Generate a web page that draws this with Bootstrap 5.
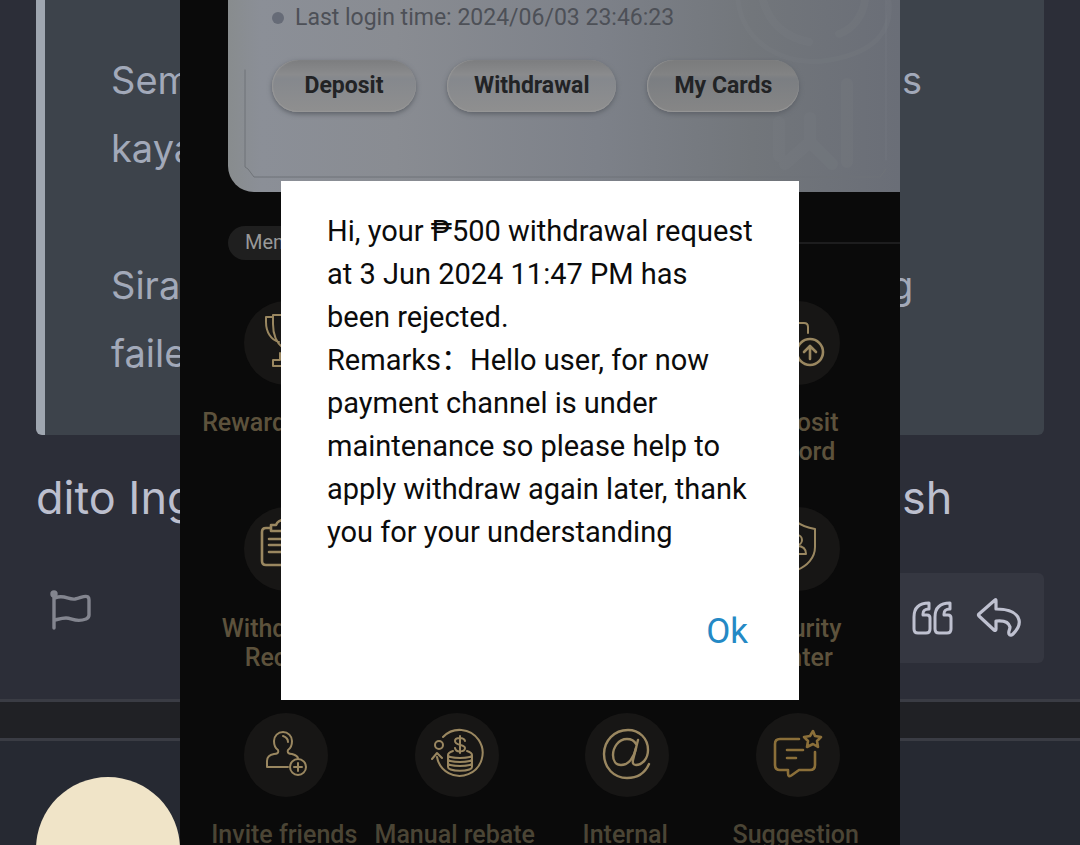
<!DOCTYPE html>
<html lang="en">
<head>
<meta charset="utf-8">
<meta name="viewport" content="width=device-width, initial-scale=1">
<title>Withdrawal notice</title>
<link href="https://cdn.jsdelivr.net/npm/bootstrap@5.3.0/dist/css/bootstrap.min.css" rel="stylesheet">
<style>
  body { background: #2c2e38; font-family: Roboto, "Noto Sans CJK SC", sans-serif; }
  .forum { font-family: Inter, "Open Sans", sans-serif; color: #bcbfce; }
  .post-quote { margin: 0 36px; padding: 46px 0 48px 66px; background: #3d434b; border-left: 9px solid #9fa6b0; border-radius: 0 0 6px 6px; color: #a2a9b9; font-size: 38px; line-height: 68px; }
  .split-line { display: grid; grid-template-columns: 1fr 142px; white-space: nowrap; }
  .split-line.wide { grid-template-columns: 1fr 154px; }
  .blank-line { height: 69px; }
  .post-text { margin: 0 36px; padding-top: 29px; font-size: 45px; line-height: 68px; }
  .post-actions { margin: 41px 36px 36px; }
  .post-actions button { border: 0; background: none; padding: 0; line-height: 0; }
  .action-group { width: 180px; height: 90px; padding: 0 22px; gap: 22px; background: #353741; border-radius: 6px; }
  .post-gap { height: 42px; background: #202125; border: solid #3a3c44; border-width: 3px 0; }
  .next-post { background: #262932; padding: 36px; }
  .avatar { width: 144px; height: 144px; background: #f0e4c8; }

  .phone { width: 720px; max-width: 100%; background: #0a0a0a; }
  .account { margin-left: 48px; padding: 3px 0 80px 44px; border-radius: 0 0 0 26px; color: #4d5057;
    background: linear-gradient(90deg, #888c8e 0, #8b8f97 5%, #898c92 25%, #7d8189 55%, #72767b 78%, #6a6e77 100%); }
  .account-art { left: 0; bottom: 0; }
  .login-time { font-size: 23px; line-height: 30px; margin-bottom: 27px; gap: 11px; }
  .dot { width: 12px; height: 12px; background: #666b77; }
  .pills { gap: 31px; }
  .pill { min-width: 144px; height: 52px; padding: 0 27px; border: 0; border-radius: 26px; color: #222325; font-size: 23px; font-weight: 700;
    background: linear-gradient(#7c7d7f, #8a8b8d 28%, #85888d 36%, #8f8f8f 100%); box-shadow: 0 2px 5px #5c6067, inset 0 -1px 1px #979797, inset 1px 0 1px #979797; }
  .pill:last-child { background: linear-gradient(#7a7b7c, #828384 28%, #7b7e82 36%, #868686 100%); }
  .section-head { margin: 34px 0 41px 48px; }
  .section-tag { padding: 0 17px 2px; border-radius: 17px; background: #1f1f1f; color: #999; font-size: 20px; line-height: 32px; }
  .section-rule { height: 2px; background: #1d1d1e; }
  .tiles { display: grid; grid-template-columns: repeat(4, 1fr); margin: 0 19px; }
  .tile { height: 206px; color: #5d523c; font-size: 25px; font-weight: 500; line-height: 29px; text-align: center; white-space: nowrap; text-decoration: none; }
  .disc { width: 84px; height: 84px; margin-bottom: 23px; margin-left: 4px; background: #171615; }
  .tile.last-row { color: #4b4535; }
  svg.line { fill: none; stroke-linecap: round; stroke-linejoin: round; }
  .disc svg { stroke: #9a8760; stroke-width: 2; }
  .disc svg.amber { stroke: #8b6f39; }

  .notice { width: 518px; max-width: 100%; height: 519px; padding: 29px 46px 38px; background: #fff; color: #0b0b0b; margin-top: 181px; }
  .notice p { font-size: 29px; line-height: 43px; white-space: nowrap; }
  .notice button { border: 0; background: none; padding: 0 5px; color: #2489c5; font-size: 35px; line-height: 60px; }
</style>
</head>
<body>
<div class="position-relative vh-100 overflow-hidden">

  <main class="forum">
    <blockquote class="post-quote">
      <div class="split-line"><span>Sem</span><span>s</span></div>
      <div class="split-line"><span>kaya</span></div>
      <div class="blank-line"></div>
      <div class="split-line wide"><span>Sira</span><span>g</span></div>
      <div class="split-line"><span>faile</span></div>
    </blockquote>
    <div class="post-text split-line"><span>dito Ing</span><span>sh</span></div>
    <div class="post-actions d-flex justify-content-between">
      <button type="button" class="align-self-start" aria-label="Report">
        <svg class="line" width="70" height="70" viewBox="0 0 70 70" stroke="#83858f" stroke-width="3.4"><path d="M18 22v33M19 25c9-4 13 2 20 1 6-1 10-4 13-2 1 1 1 2 1 3v15c0 2-1 3-3 4-10 4-14-1-20-1-4 0-7 1-11 2"/><circle cx="18" cy="21" r="2"/></svg>
      </button>
      <div class="action-group d-flex align-items-center justify-content-end">
        <button type="button" aria-label="Quote">
          <svg class="line" width="42" height="34" viewBox="0 0 42 34" stroke="#bfc1d0" stroke-width="3"><path d="M17 2v6c-5 0-6 2-6 5v1h4q3 0 3 3v11q0 4-4 4H6q-4 0-4-4V16C2 6 8 2 17 2z"/><path d="M38 2v6c-5 0-6 2-6 5v1h4q3 0 3 3v11q0 4-4 4h-8q-4 0-4-4V16C23 6 29 2 38 2z"/></svg>
        </button>
        <button type="button" aria-label="Reply">
          <svg class="line" width="46" height="42" viewBox="0 0 46 42" stroke="#bfc1d0" stroke-width="3.2"><path d="M19 3 3 17q-1 1 0 2l15 14q2 1 2-1v-8c9-1 13 2 14 6 0 3-2 4-1 7 1 2 3 1 4 0 5-5 7-10 6-14-2-8-10-11-23-11V4q0-2-1-1z"/></svg>
        </button>
      </div>
    </div>
    <div class="post-gap"></div>
    <div class="next-post"><div class="avatar rounded-circle"></div></div>
  </main>

  <div class="position-absolute top-0 start-0 w-100 h-100 d-flex justify-content-center">
    <div class="phone h-100 overflow-hidden">
      <section class="account position-relative">
        <svg class="account-art position-absolute line" width="672" height="192" viewBox="0 0 672 192">
          <path d="M17 70v97l3 2 6 8h626l6-8" stroke="#6f7378"/>
          <path d="M658 0v160" stroke="#7a7e85" opacity=".5"/>
          <g stroke="#858a8f" opacity=".12">
            <path d="M510 0c4 42 46 68 92 60s62-30 59-58" stroke-width="5"/>
            <path d="M535 0c6 24 24 38 46 42M611 34c14-5 24-18 26-34" stroke-width="8"/>
            <path d="M551 122v34M582 118v24l-25 22M582 142l22 22M619 84v78" stroke-width="12"/>
          </g>
        </svg>
        <div class="position-relative">
          <div class="login-time d-flex align-items-center"><span class="dot rounded-circle"></span><span>Last login time: 2024/06/03 23:46:23</span></div>
          <div class="pills d-flex">
            <button type="button" class="pill">Deposit</button>
            <button type="button" class="pill">Withdrawal</button>
            <button type="button" class="pill">My Cards</button>
          </div>
        </div>
      </section>

      <div class="section-head d-flex align-items-center">
        <div class="section-tag">Member</div>
        <div class="section-rule flex-grow-1"></div>
      </div>

      <nav class="tiles">
        <a href="#" class="tile d-flex flex-column align-items-center"><span class="disc rounded-circle"><svg class="line" width="84" height="84" viewBox="0 0 84 84"><path d="M29 14h26v9c0 12-5 20-10 24v5h-6v-5c-5-4-10-12-10-24zM29 16h-7v5c0 10 5 18 13 20M55 16h7v5c0 10-5 18-13 20M36 52v7h-7v6h26v-6h-7v-7M38 26l4-3v9"/></svg></span>Reward Center</a>
        <span></span><span></span>
        <a href="#" class="tile d-flex flex-column align-items-center"><span class="disc rounded-circle"><svg class="line" width="84" height="84" viewBox="0 0 84 84"><path d="M38 60H22V22h26q4 0 4 4v6"/><g stroke-width="2.6"><circle cx="54" cy="51" r="13"/><path d="M54 58V45M48 51l6-6 6 6"/></g></svg></span>Deposit<br>Record</a>

        <a href="#" class="tile d-flex flex-column align-items-center"><span class="disc rounded-circle"><svg class="line" width="84" height="84" viewBox="0 0 84 84"><path d="M27 21h-5q-4 0-4 4v29q0 4 4 4h36q4 0 4-4V25q0-4-4-4h-5M27 24v-6h5q2-5 8-5t8 5h5v6zM25 32h28M25 38h28M25 45h28" stroke-width="2.6"/></svg></span>Withdrawal<br>Record</a>
        <span></span><span></span>
        <a href="#" class="tile d-flex flex-column align-items-center"><span class="disc rounded-circle"><svg class="line" width="84" height="84" viewBox="0 0 84 84"><path d="M41 15c6 5 12 6 18 7v18c0 11-8 19-18 23-10-4-18-12-18-23V22c6-1 12-2 18-7z"/><circle cx="41" cy="33" r="5"/><path d="M32 47c0-6 4-8 9-8s9 2 9 8z"/></svg></span>Security<br>Center</a>

        <a href="#" class="tile last-row d-flex flex-column align-items-center"><span class="disc rounded-circle"><svg class="line" width="84" height="84" viewBox="0 0 84 84"><path d="M34 37c-3-2-4-5-4-9a9 9 0 0 1 18 0c0 4-1 7-4 9-1 3 1 4 4 4 3 1 5 1 6 4M34 37c1 3-1 4-4 4-5 1-7 3-7 7v6h21M39 23c3 1 5 3 5 6"/><circle cx="54" cy="54" r="8"/><path d="M54 50v8M50 54h8"/></svg></span>Invite friends</a>
        <a href="#" class="tile last-row d-flex flex-column align-items-center"><span class="disc rounded-circle"><svg class="line" width="84" height="84" viewBox="0 0 84 84"><path d="M28 24a23 23 0 1 1-6 20M17 46l5-6 5 5"/><circle cx="24" cy="32" r="4"/><path d="M50 28c-1-4-10-4-10 0 0 5 10 3 10 7s-9 5-10 0M45 23v17M38 38c-3 1-5 2-5 4v12c0 5 24 5 24 0V42c0-2-2-3-5-4M33 42c0 4 24 4 24 0M33 46c0 4 24 4 24 0M33 50c0 4 24 4 24 0"/></svg></span>Manual rebate</a>
        <a href="#" class="tile last-row d-flex flex-column align-items-center"><span class="disc rounded-circle"><svg class="line" width="84" height="84" viewBox="0 0 84 84"><path d="M53 27 48 47q-1 5 3 5c6 0 12-6 12-15 0-12-9-20-20-20-14 0-24 11-24 24 0 14 10 24 23 24 10 0 18-5 22-14" stroke-width="2.4"/><path d="M51 31c-2-4-5-5-9-5-9 0-14 9-14 16 0 6 3 10 8 10 8 0 13-8 15-17" stroke-width="2.4"/></svg></span>Internal<br>Message</a>
        <a href="#" class="tile last-row d-flex flex-column align-items-center"><span class="disc rounded-circle"><svg class="line amber" width="84" height="84" viewBox="0 0 84 84"><g stroke-width="2.6"><path d="M43 26H24q-5 0-5 5v21q0 5 5 5h8v3q0 5 4 2l7-5h11q5 0 5-5V39M31 37h16M31 45h9"/><path d="m57 18 2 5 6 1-4 4 1 6-5-3-6 3 1-6-4-4 6-1z"/></g></svg></span>Suggestion</a>
      </nav>
    </div>
  </div>

  <div class="position-absolute top-0 start-0 w-100 d-flex justify-content-center">
    <div class="notice d-flex flex-column" role="dialog" aria-modal="true" aria-label="Withdrawal request">
      <p class="mb-0">Hi, your ₱500 withdrawal request<br>at 3 Jun 2024 11:47 PM has<br>been rejected.<br>Remarks：Hello user, for now<br>payment channel is under<br>maintenance so please help to<br>apply withdraw again later, thank<br>you for your understanding</p>
      <button type="button" class="align-self-end mt-auto">Ok</button>
    </div>
  </div>
</div>
<script src="https://cdn.jsdelivr.net/npm/bootstrap@5.3.0/dist/js/bootstrap.bundle.min.js"></script>
</body>
</html>
